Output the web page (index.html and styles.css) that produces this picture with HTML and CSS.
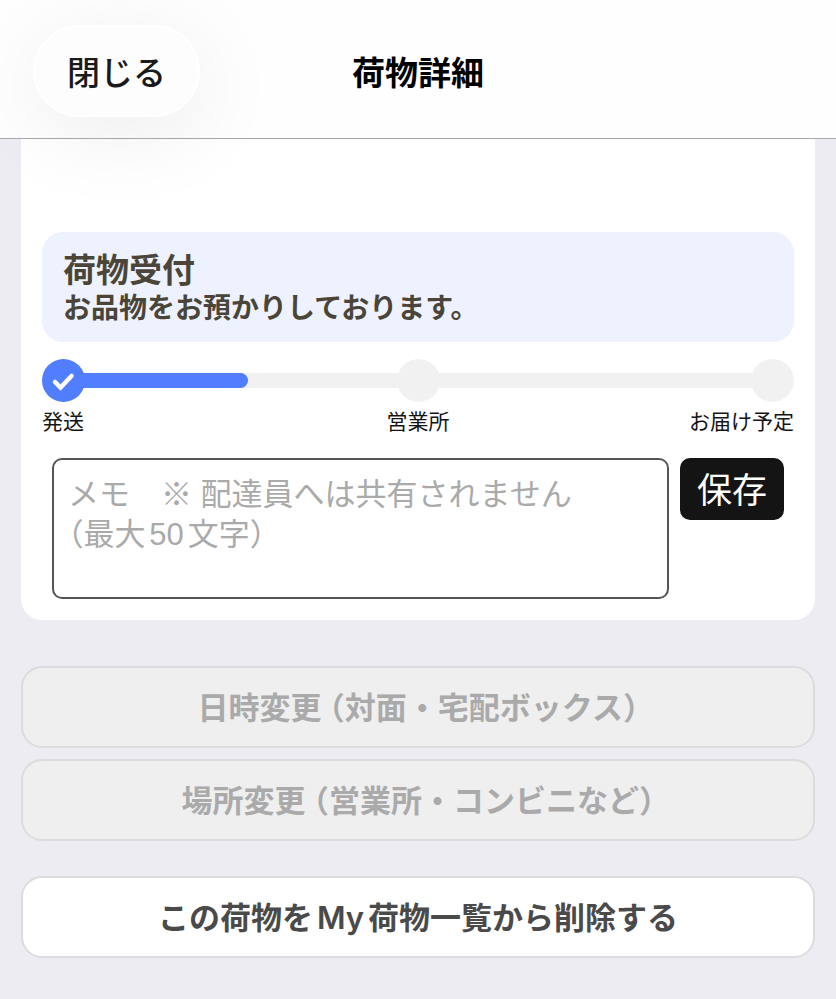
FILE: index.html
```
<!DOCTYPE html>
<html lang="ja">

<head>
    <meta charset="UTF-8">
    <meta name="viewport" content="width=device-width, initial-scale=1.0">
    <title>荷物詳細</title>
    <link rel="stylesheet" href="styles.css">
</head>

<body>
    <header class="header">
        <button type="button" class="close-button">閉じる</button>
        <h1>荷物詳細</h1>
    </header>
    <main>
        <section class="card">
            <div class="status">
                <h2>荷物受付</h2>
                <p>お品物をお預かりしております。</p>
            </div>
            <div class="progress">
                <div class="track">
                    <div class="bar"></div>
                </div>
                <div class="step done">
                    <svg viewBox="0 0 43 43" width="43" height="43" aria-hidden="true">
                        <path d="M13 23 L18.5 28.5 L29.5 17" fill="none" stroke="#fff" stroke-width="4.5" stroke-linecap="round" />
                    </svg>
                </div>
                <div class="step"></div>
                <div class="step"></div>
            </div>
            <div class="labels">
                <span>発送</span>
                <span>営業所</span>
                <span>お届け予定</span>
            </div>
            <form class="memo">
                <textarea aria-label="メモ" maxlength="50" placeholder="メモ　※ 配達員へは共有されません&#10;（最大50文字）"></textarea>
                <button type="button" class="save-button">保存</button>
            </form>
        </section>
        <div class="actions">
            <button type="button" disabled>日時変更 <span class="paren">（</span>対面・宅配ボックス<span class="paren">）</span></button>
            <button type="button" disabled>場所変更 <span class="paren">（</span>営業所・コンビニなど<span class="paren">）</span></button>
            <button type="button" class="delete-button">この荷物をMy荷物一覧から削除する</button>
        </div>
    </main>
</body>

</html>
```
FILE: styles.css
```
* {
    box-sizing: border-box;
}

body {
    margin: 0;
    background-color: #edecf3;
    color: #141414;
    font-family: Inter, "Noto Sans CJK JP", sans-serif;
    text-autospace: normal;
}

h1,
h2,
p {
    margin: 0;
}

button,
textarea {
    font-family: inherit;
    text-autospace: inherit;
}

/* Header */
.header {
    position: relative;
    z-index: 1;
    display: grid;
    grid-template-columns: 1fr auto 1fr;
    align-items: center;
    padding: 25px 33px 21px;
    background-color: #fefefe;
    border-bottom: 1px solid #a9a9a9;
}

.header h1 {
    padding-top: 4px;
    font-size: 33px;
    line-height: 44px;
    font-weight: 600;
    color: #000;
}

.close-button {
    justify-self: start;
    height: 92px;
    padding: 0 32px;
    border: 2px solid #fff;
    border-radius: 46px;
    background-color: #fdfdfd;
    color: #1a1a1a;
    font-size: 33px;
    font-weight: 500;
    box-shadow: 4px 16px 90px rgba(0, 0, 0, 0.07);
}

main {
    padding: 0 21px 40px;
}

/* Package card */
.card {
    padding: 93px 21px 21px;
    background-color: #fff;
    border-radius: 0 0 21px 21px;
}

.status {
    padding: 18px 21px 16px;
    border-radius: 21px;
    background-color: #eef2fe;
    color: #4a4538;
}

.status h2 {
    font-size: 33px;
    line-height: 40px;
    font-weight: 600;
}

.status p {
    font-size: 28px;
    line-height: 36px;
    font-weight: 600;
}

/* Delivery progress */
.progress {
    position: relative;
    display: flex;
    justify-content: space-between;
    margin-top: 17px;
}

.track {
    position: absolute;
    top: 14px;
    left: 21px;
    right: 21px;
    height: 15px;
    background-color: #f1f1f1;
}

.bar {
    width: 26%;
    height: 100%;
    border-radius: 0 8px 8px 0;
    background-color: #517dff;
}

.step {
    position: relative;
    width: 43px;
    height: 43px;
    border-radius: 50%;
    background-color: #f1f1f1;
}

.step.done {
    background-color: #517dff;
}

.step svg {
    display: block;
}

.labels {
    display: grid;
    grid-template-columns: 1fr auto 1fr;
    margin-top: 4px;
    font-size: 21px;
    line-height: 32px;
}

.labels span:last-child {
    text-align: right;
}

/* Memo */
.memo {
    display: flex;
    align-items: flex-start;
    gap: 11px;
    margin-top: 20px;
    padding: 0 10px;
}

.memo textarea {
    flex: 1;
    height: 141px;
    padding: 15px 14px;
    border: 2px solid #555;
    border-radius: 10px;
    background-color: #fff;
    font-family: "Liberation Sans", "Noto Sans CJK JP", sans-serif;
    font-size: 31px;
    line-height: 40px;
    resize: none;
    text-spacing-trim: trim-start;
}

.memo textarea::placeholder {
    color: #aaa;
}

.save-button {
    height: 62px;
    padding: 0 17px 4px;
    border: none;
    border-radius: 10px;
    background-color: #141414;
    color: #fff;
    font-size: 35px;
}

/* Action buttons */
.actions {
    display: flex;
    flex-direction: column;
    gap: 11px;
    margin-top: 46px;
}

.actions button {
    height: 82px;
    padding: 0 16px 4px;
    border: 2px solid #dcdcdc;
    border-radius: 21px;
    background-color: #efefef;
    color: #aaa;
    font-size: 31px;
    font-weight: 600;
}

/* half-width brackets */
.paren {
    font-feature-settings: "halt";
}

.actions .delete-button {
    margin-top: 24px;
    background-color: #fff;
    color: #4a4a4a;
}
```
